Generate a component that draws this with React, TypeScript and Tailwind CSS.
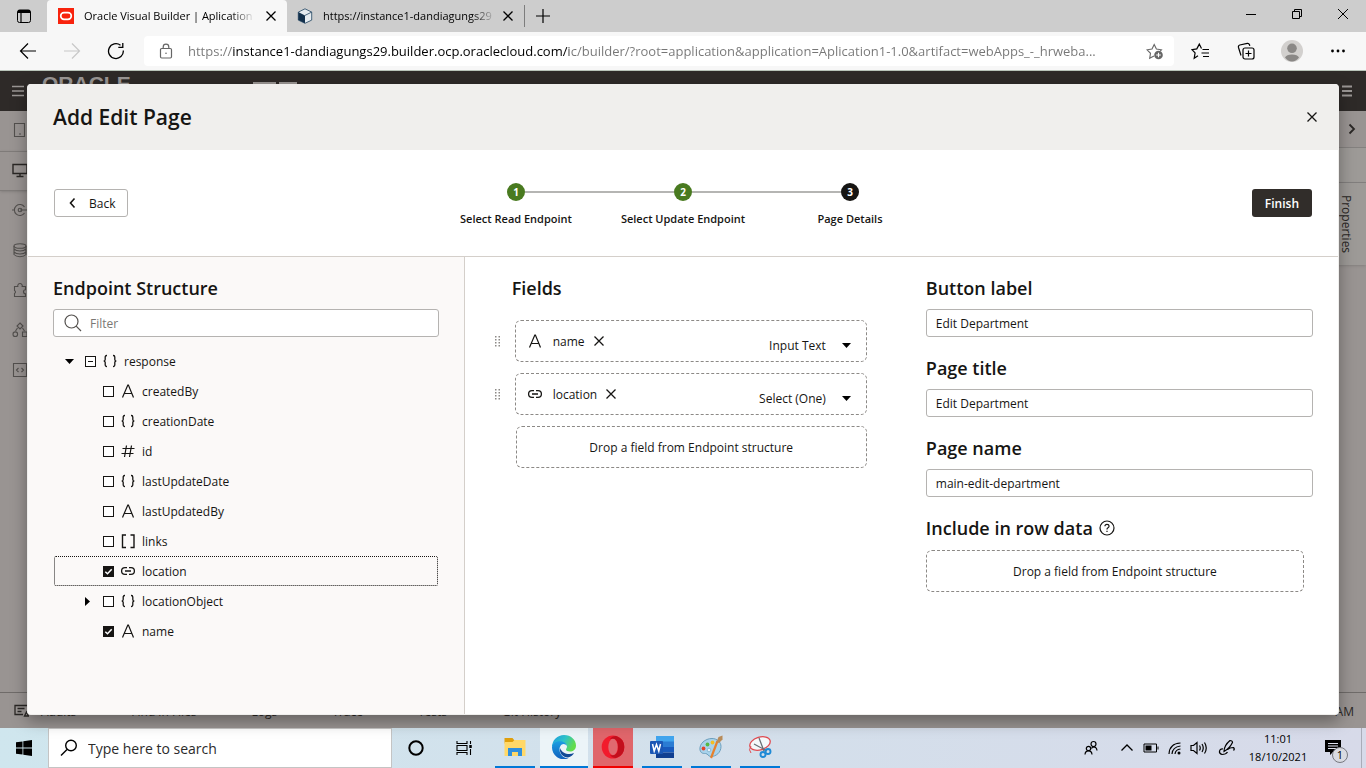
import React, { useState } from "react";

type IconProps = { className?: string };

const Stroke = ({
  size = 16,
  width = 1,
  className = "",
  children,
}: {
  size?: number;
  width?: number;
  className?: string;
  children: React.ReactNode;
}) => (
  <svg
    width={size}
    height={size}
    viewBox={`0 0 ${size} ${size}`}
    fill="none"
    stroke="currentColor"
    strokeWidth={width}
    className={`shrink-0 ${className}`}
    aria-hidden="true"
  >
    {children}
  </svg>
);

/* ---------- shared icons ---------- */

const Cross = ({ className }: IconProps) => (
  <Stroke size={16} width={1.3} className={className}>
    <path d="M3.5 3.5l9 9M12.5 3.5l-9 9" />
  </Stroke>
);

const TextType = () => (
  <Stroke size={16} width={1.2}>
    <path d="M2.5 14.5L7.8 2h.6l5.1 12.5M4.3 10.5h7.4" />
  </Stroke>
);
const ObjectType = () => (
  <Stroke size={16} width={1.3}>
    <path d="M5 2.500h-.3q-1.500 0-1.500 1.500v2.500q0 1.500-1.500 1.500 1.500 0 1.500 1.500v2.500q0 1.500 1.500 1.500H5M11 2.500h.3q1.500 0 1.500 1.500v2.500q0 1.500 1.500 1.500-1.500 0-1.500 1.500v2.500q0 1.500-1.500 1.500H11" />
  </Stroke>
);
const NumberType = () => (
  <Stroke size={16} width={1.2}>
    <path d="M6.500 2.500L4.500 14M11.500 2.500l-2 11.500M2.500 5.500h12M1.500 10.500h12" />
  </Stroke>
);
const ArrayType = () => (
  <Stroke size={16} width={1.4}>
    <path d="M6 2H2.500v12.500H6M10.500 2H14v12.500h-3.500" />
  </Stroke>
);
const LinkType = () => (
  <Stroke size={16} width={1.3}>
    <path d="M7 4.600H5a3.400 3.400 0 0 0 0 6.800h2M9 4.600h2a3.400 3.400 0 0 1 0 6.800H9M5 8h6" />
  </Stroke>
);

const typeIcons = {
  text: TextType,
  object: ObjectType,
  number: NumberType,
  array: ArrayType,
  link: LinkType,
};
type FieldType = keyof typeof typeIcons;

/* ---------- browser chrome ---------- */

function TabTitle({ children }: { children: string }) {
  return (
    <span className="min-w-0 flex-1 whitespace-nowrap text-left text-[11px] leading-4 text-black [mask-image:linear-gradient(to_right,black_86%,transparent)]">
      {children}
    </span>
  );
}

function TabStrip() {
  return (
    <div className="flex h-8 shrink-0 items-stretch bg-[#cdcdcd] text-black">
      <button aria-label="Tab actions" className="flex w-[47px] items-center justify-center">
        <Stroke size={16}>
          <rect x="1.500" y="2" width="13" height="12.500" rx="2" />
          <path d="M2 3.500h12" strokeWidth="3" />
          <path d="M5 4v10" strokeWidth="1.200" />
        </Stroke>
      </button>
      <div className="flex w-60 items-center rounded-t bg-[#f7f7f7] pl-[11px] pr-2">
        <svg width="16" height="16" viewBox="0 0 16 16" className="mr-[10px] shrink-0" aria-hidden="true">
          <rect width="16" height="16" fill="#f8230d" />
          <rect x="2.700" y="4.700" width="10.600" height="6.600" rx="3.300" fill="none" stroke="#fff" strokeWidth="1.700" />
        </svg>
        <TabTitle>Oracle Visual Builder | Aplication</TabTitle>
        <button aria-label="Close tab" className="ml-2 shrink-0">
          <Cross />
        </button>
      </div>
      <div className="flex w-[238px] items-center border-r border-[#7d7d7d] pl-[10px] pr-2 [border-image:linear-gradient(transparent_18%,#7d7d7d_18%_82%,transparent_82%)_1]">
        <svg width="16" height="16" viewBox="0 0 16 16" className="mr-[10px] shrink-0" aria-hidden="true">
          <path d="M8 .8l6.700 3.300v8L8 15.300l-6.700-3.200v-8z" fill="#e5ebf0" stroke="#1f4260" strokeWidth=".8" />
          <path d="M1.300 4.100L8 7.400v7.900l-6.700-3.200z" fill="#12304c" />
          <path d="M8 7.400l6.700-3.300" stroke="#1f4260" strokeWidth=".8" />
        </svg>
        <TabTitle>https://instance1-dandiagungs29</TabTitle>
        <button aria-label="Close tab" className="ml-1 shrink-0">
          <Cross />
        </button>
      </div>
      <button aria-label="New tab" className="flex w-9 items-center justify-center">
        <Stroke size={16} width={1.200}>
          <path d="M8 1v14M1 8h14" />
        </Stroke>
      </button>
      <div className="ml-auto flex pb-1">
        <button aria-label="Minimize" className="flex w-[46px] items-center justify-center">
          <Stroke size={10}>
            <path d="M0 5.500h10" />
          </Stroke>
        </button>
        <button aria-label="Restore" className="flex w-[46px] items-center justify-center">
          <Stroke size={10}>
            <path d="M.5 2.500h7v7h-7zM2.500 2.500v-2h7v7h-2" />
          </Stroke>
        </button>
        <button aria-label="Close" className="flex w-[46px] items-center justify-center">
          <Stroke size={10}>
            <path d="M0 0l10 10M10 0L0 10" />
          </Stroke>
        </button>
      </div>
    </div>
  );
}

const url =
  "https://instance1-dandiagungs29.builder.ocp.oraclecloud.com/ic/builder/?root=application&application=Aplication1-1.0&artifact=webApps_-_hrweba...";

function AddressRow() {
  return (
    <div className="flex h-[39px] shrink-0 items-center border-b border-[#b9c4b9] bg-[#f7f7f7] pl-[6px] pr-[5px] text-black">
      <button aria-label="Back" className="flex w-11 justify-center">
        <Stroke size={18} width={1.200}>
          <path d="M17 9H1.500M9 1.500L1.500 9 9 16.500" />
        </Stroke>
      </button>
      <button aria-label="Forward" className="flex w-11 justify-center text-[#c8c8c8]">
        <Stroke size={18} width={1.200}>
          <path d="M1 9h15.500M9 1.500L16.500 9 9 16.500" />
        </Stroke>
      </button>
      <button aria-label="Refresh" className="flex w-11 justify-center">
        <Stroke size={18} width={1.300}>
          <path d="M16.300 8.500A7.400 7.400 0 1 1 13.500 3.300M15.800 1v4.300h-4.500" />
        </Stroke>
      </button>
      <div className="ml-[6px] mr-[3px] flex h-[30px] min-w-0 flex-1 items-center rounded bg-white px-[14px] text-[#666]">
        <Stroke size={16} width={1.200}>
          <rect x="2.500" y="5.500" width="11" height="9.500" rx="1.200" />
          <path d="M5.200 5.500V4a2.800 2.800 0 0 1 5.600 0v1.500" />
          <circle cx="8" cy="10.300" r=".8" fill="currentColor" stroke="none" />
        </Stroke>
        <input
          aria-label="Address"
          defaultValue={url}
          className="mx-[14px] min-w-0 flex-1 bg-[linear-gradient(to_right,#767676_45px,#000_45px_381px,#767676_381px)] bg-clip-text text-[13px] leading-5 text-transparent outline-none"
        />
        <Stroke size={18} width={1.100} className="-mr-1">
          <path d="M8 14l-4.300 2.300.8-5L1 7.800l5-.7L8.200 2.500l2.200 4.600 5 .7-1.200 1.200" />
          <circle cx="12.500" cy="13" r="4.300" fill="currentColor" stroke="none" />
          <path d="M12.500 10.700v4.600M10.200 13h4.600" stroke="#fff" />
        </Stroke>
      </div>
      <button aria-label="Favorites" className="flex w-[46px] justify-center">
        <Stroke size={18} width={1.200}>
          <path d="M7 13.700l-3.800 2.500.9-5.300L1 7.600l4.800-.7 2.500-4.800 2.200 4.400M11.500 7.500H18M10.500 11H18M12 14.500h6" />
        </Stroke>
      </button>
      <button aria-label="Collections" className="flex w-[46px] justify-center">
        <Stroke size={18} width={1.200}>
          <rect x="6" y="6" width="11" height="11" rx="2" />
          <path d="M11.500 8.500v6M8.500 11.500h6M4 13.500L1.500 5.500q-.5-2 1.300-2.500l7.500-1.700q1.600-.2 2.200 1.500l.3 1" />
        </Stroke>
      </button>
      <button aria-label="Profile" className="flex w-[46px] justify-center">
        <svg width="22" height="22" viewBox="0 0 22 22" aria-hidden="true">
          <circle cx="11" cy="11" r="11" fill="#d2d0ce" />
          <circle cx="11" cy="8.300" r="4.800" fill="#8a8886" />
          <path d="M4 17.500q1.500-3 7-3t7 3q-3 4-7 4t-7-4z" fill="#8a8886" />
        </svg>
      </button>
      <button aria-label="Settings and more" className="flex w-[46px] justify-center">
        <svg width="16" height="16" viewBox="0 0 16 16" aria-hidden="true">
          <circle cx="2.500" cy="8" r="1.400" />
          <circle cx="8" cy="8" r="1.400" />
          <circle cx="13.500" cy="8" r="1.400" />
        </svg>
      </button>
    </div>
  );
}

/* ---------- dimmed application behind the dialog ---------- */

const railIcons: { label: string; active?: boolean; drawing: React.ReactNode }[] = [
  { label: "Mobile", drawing: <path d="M2.500 1.500h10v13h-10zM7 12h2" /> },
  { label: "Web", active: true, drawing: <path d="M1 2.500h14v9H1zM8 11.500v3M4.500 14.500h7" strokeWidth="1.400" /> },
  {
    label: "Services",
    drawing: (
      <>
        <path d="M12.500 5a5.500 5.500 0 1 0 0 6M0 8h2.500M8 8h8" />
        <circle cx="8" cy="8" r="1.800" />
      </>
    ),
  },
  {
    label: "Business objects",
    drawing: (
      <>
        <ellipse cx="8" cy="4" rx="6" ry="2.300" />
        <path d="M2 4v8.500q2 2.300 6 2.300t6-2.300V4M2 7q2 2 6 2t6-2M2 10q2 2 6 2t6-2" />
      </>
    ),
  },
  { label: "Components", drawing: <path d="M2.500 4.500h3.300a2.300 2.300 0 1 1 4.400 0h3.300v3.300a2 2 0 1 0 0 4v2.700h-11v-3q2-1.500 0-3z" /> },
  {
    label: "Processes",
    drawing: (
      <>
        <path d="M8 1l3 3-3 3-3-3zM10.500 10h4.500v4.500h-4.500zM3.500 9l2-3M12.500 9l-2-3" />
        <circle cx="3.300" cy="12.200" r="2.300" />
      </>
    ),
  },
  { label: "Source", drawing: <path d="M1.500 1.500h13v13h-13zM6.500 6l-2 2 2 2M9.500 6l2 2-2 2" /> },
];

const footerTabs = ["Audits", "Find in Files", "Logs", "Trace", "Tests", "Git History"];

function AppBackdrop() {
  return (
    <div className="flex h-full flex-col bg-[#999492] text-[#2a2725]">
      <header className="flex h-10 shrink-0 items-start overflow-hidden bg-[#2e2a28] px-3 text-[#9a9694]">
        <Stroke size={12} width={1.500} className="mt-[14px]">
          <path d="M0 1.500h12M0 6h12M0 10.500h12" />
        </Stroke>
        <span className="ml-[18px] font-['Liberation_Sans',sans-serif] text-[21px] font-bold leading-[26px]">ORACLE</span>
        <svg width="44" height="24" viewBox="0 0 44 24" fill="currentColor" className="ml-[122px] mt-[11px]" aria-hidden="true">
          <path d="M0 0h23v2H0zM26 0h18v2H26z" />
        </svg>
        <Stroke size={12} width={2} className="ml-auto mt-[14px]">
          <path d="M0 1.500h10M0 6h10M0 10.500h10" />
        </Stroke>
      </header>
      <div className="flex min-h-0 flex-1">
        <nav className="flex w-10 flex-col">
          {railIcons.map((item) => (
            <a
              key={item.label}
              href="#"
              aria-label={item.label}
              className={
                item.active
                  ? "flex h-10 items-center border-y border-[#7f7b79] pb-0.5 pl-3 shadow"
                  : "flex h-10 items-center pb-0.5 pl-3 text-[#53504e]"
              }
            >
              <Stroke size={16} width={1.100}>
                {item.drawing}
              </Stroke>
            </a>
          ))}
        </nav>
        <div className="ml-auto flex w-9 flex-col">
          <button aria-label="Expand" className="flex h-9 items-center justify-end pr-[6px]">
            <Stroke size={16} width={1.800}>
              <path d="M5.500 3.500L10 8l-4.500 4.500" />
            </Stroke>
          </button>
          <div className="h-9 border-y border-[#84817f] bg-[#9d9a97]" />
          <div className="flex h-[82px] items-center justify-end bg-[#9d9a97] pr-3 text-[12px] leading-4 shadow">
            <span className="[writing-mode:vertical-rl]">Properties</span>
          </div>
        </div>
      </div>
      <footer className="flex h-9 shrink-0 items-start border-t border-[#6f6b69] pl-[14px] pr-3 pt-[11px] text-[12px] leading-4">
        <Stroke size={15} width={1.300} className="mr-3">
          <path d="M14 7V1.500H1v9h8M3.500 4.500h7M3.500 7.500h4M12.500 8l2 4h-4z" />
        </Stroke>
        {footerTabs.map((tab) => (
          <span key={tab} className="mr-[55px] whitespace-nowrap">
            {tab}
          </span>
        ))}
        <span className="ml-auto">AM</span>
      </footer>
    </div>
  );
}

/* ---------- dialog ---------- */

const steps = ["Select Read Endpoint", "Select Update Endpoint", "Page Details"];

function Stepper() {
  return (
    <ol className="grid grid-cols-3 pt-[3px]">
      {steps.map((label, i) => (
        <li key={label} className="flex w-[167px] flex-col items-center gap-[10px]">
          <div className="flex w-full items-center">
            <span className={i === 0 ? "h-[2px] flex-1" : "h-[2px] flex-1 bg-[#b5b5b3]"} />
            <span
              className={
                i === 2
                  ? "flex size-[18px] items-center justify-center rounded-full bg-[#161513] text-[10px] font-bold leading-3 text-white"
                  : "flex size-[18px] items-center justify-center rounded-full bg-[#497a20] text-[10px] font-bold leading-3 text-white"
              }
            >
              {i + 1}
            </span>
            <span className={i === 2 ? "h-[2px] flex-1" : "h-[2px] flex-1 bg-[#b5b5b3]"} />
          </div>
          <span className="whitespace-nowrap text-[11px] font-semibold leading-4">{label}</span>
        </li>
      ))}
    </ol>
  );
}

type Row = { name: string; type: FieldType; expandable?: boolean };

const rows: Row[] = [
  { name: "createdBy", type: "text" },
  { name: "creationDate", type: "object" },
  { name: "id", type: "number" },
  { name: "lastUpdateDate", type: "object" },
  { name: "lastUpdatedBy", type: "text" },
  { name: "links", type: "array" },
  { name: "location", type: "link" },
  { name: "locationObject", type: "object", expandable: true },
  { name: "name", type: "text" },
];

function Tick({ checked, mixed, onChange }: { checked: boolean; mixed?: boolean; onChange: () => void }) {
  return (
    <span className="relative flex size-[11px] shrink-0">
      <input
        type="checkbox"
        checked={checked}
        onChange={onChange}
        className="size-[11px] appearance-none border border-[#161513] bg-white checked:bg-[#161513]"
      />
      <svg viewBox="0 0 11 11" fill="none" className="pointer-events-none absolute inset-0" aria-hidden="true">
        {checked && <path d="M2.300 5.700l2.200 2.100 4.200-4.600" stroke="#fff" strokeWidth="1.500" />}
        {mixed && <path d="M3 5.500h5" stroke="#161513" />}
      </svg>
    </span>
  );
}

function EndpointTree() {
  const [selected, setSelected] = useState<string[]>(["location", "name"]);
  const toggle = (name: string) =>
    setSelected((cur) => (cur.includes(name) ? cur.filter((n) => n !== name) : [...cur, name]));
  return (
    <section className="w-1/3 shrink-0 border-r border-[#d4cfca] bg-[#fbf9f8] px-[25px] pt-[19px]">
      <h2 className="text-[18px] font-semibold leading-6">Endpoint Structure</h2>
      <div className="mt-[9px] flex h-7 items-center rounded-[3px] border border-[#b5b3b1] bg-white pl-[10px]">
        <Stroke size={18} width={1.200} className="text-[#55524f]">
          <circle cx="7.500" cy="7.500" r="6.500" />
          <path d="M12.200 12.200L17 17" />
        </Stroke>
        <input
          aria-label="Filter"
          placeholder="Filter"
          className="ml-2 w-full min-w-0 bg-transparent pt-0.5 text-[12px] leading-4 outline-none placeholder:text-[#7a7773]"
        />
      </div>
      <ul className="mt-[9px] px-px text-[12px]">
        <li className="flex h-[30px] items-center pl-[11px]">
          <svg width="9" height="5" viewBox="0 0 9 5" aria-hidden="true">
            <path d="M0 0h9L4.500 5z" />
          </svg>
          <label className="ml-[11px] flex items-center gap-[6px]">
            <Tick checked={false} mixed onChange={() => setSelected([])} />
            <ObjectType />
            <span className="pt-0.5 leading-4">response</span>
          </label>
        </li>
        {rows.map((row) => {
          const Icon = typeIcons[row.type];
          return (
            <li
              key={row.name}
              className={
                row.name === "location"
                  ? "flex h-[30px] items-center rounded-[2px] border border-dotted border-[#161513] pl-[30px]"
                  : "flex h-[30px] items-center border border-transparent pl-[30px]"
              }
            >
              <span className="flex w-[18px]">
                {row.expandable && (
                  <svg width="5" height="9" viewBox="0 0 5 9" aria-hidden="true">
                    <path d="M0 0v9l5-4.500z" />
                  </svg>
                )}
              </span>
              <label className="flex items-center gap-[6px]">
                <Tick checked={selected.includes(row.name)} onChange={() => toggle(row.name)} />
                <Icon />
                <span className="pt-0.5 leading-4">{row.name}</span>
              </label>
            </li>
          );
        })}
      </ul>
    </section>
  );
}

const fields: { name: string; type: FieldType; control: string }[] = [
  { name: "name", type: "text", control: "Input Text" },
  { name: "location", type: "link", control: "Select (One)" },
];

function Fields() {
  return (
    <section>
      <h2 className="pl-[17px] text-[18px] font-semibold leading-6">Fields</h2>
      <div className="mt-5 flex flex-col gap-[11px] text-[12px] leading-4">
        {fields.map((field) => {
          const Icon = typeIcons[field.type];
          return (
            <div key={field.name} className="flex items-center">
              <svg width="5" height="11" viewBox="0 0 5 11" fill="#8c8986" className="mr-[15px] shrink-0" aria-hidden="true">
                <path d="M0 0h1.500v1.500H0zM3.500 0H5v1.500H3.500zM0 3h1.500v1.500H0zM3.500 3H5v1.500H3.500zM0 6h1.500v1.500H0zM3.500 6H5v1.500H3.500zM0 9h1.500v1.500H0zM3.500 9H5v1.500H3.500z" />
              </svg>
              <div className="flex h-[42px] flex-1 items-center rounded-md border border-dashed border-[#8c8986] pl-[11px] pr-[15px]">
                <Icon />
                <span className="ml-[10px] pt-0.5">{field.name}</span>
                <button aria-label={`Remove ${field.name}`} className="ml-[6px]">
                  <Cross />
                </button>
                <span className="ml-auto flex items-center pt-2">
                  <select
                    aria-label={`Control for ${field.name}`}
                    defaultValue={field.control}
                    className="field-sizing-content appearance-none bg-transparent pr-4 pt-0.5 outline-none"
                  >
                    <option>{field.control}</option>
                  </select>
                  <svg width="9" height="5" viewBox="0 0 9 5" className="pointer-events-none" aria-hidden="true">
                    <path d="M0 0h9L4.500 5z" />
                  </svg>
                </span>
              </div>
            </div>
          );
        })}
        <div className="ml-[21px] flex h-[42px] items-center justify-center rounded-md border border-dashed border-[#8c8986] pt-0.5">
          Drop a field from Endpoint structure
        </div>
      </div>
    </section>
  );
}

const settings = [
  { id: "button-label", label: "Button label", value: "Edit Department" },
  { id: "page-title", label: "Page title", value: "Edit Department" },
  { id: "page-name", label: "Page name", value: "main-edit-department" },
];

function PageSettings() {
  return (
    <section className="text-[12px] leading-4">
      {settings.map((s) => (
        <div key={s.id} className="mb-[19px]">
          <label htmlFor={s.id} className="block text-[18px] font-semibold leading-6">
            {s.label}
          </label>
          <input
            id={s.id}
            defaultValue={s.value}
            className="mt-[9px] h-7 w-full rounded-[3px] border border-[#b5b3b1] px-[9px] outline-none"
          />
        </div>
      ))}
      <h2 className="flex items-center gap-[6px] text-[18px] font-semibold leading-6">
        Include in row data
        <button aria-label="Help" className="font-normal">
          <Stroke size={16} width={1.200}>
            <circle cx="8" cy="8" r="7" />
            <path d="M5.900 6.300q.1-2 2.100-2t2.100 1.800q0 1.100-1.100 1.700T8 9.500M8 10.700v1.300" />
          </Stroke>
        </button>
      </h2>
      <div className="mr-[9px] mt-[10px] flex h-[42px] items-center justify-center rounded-md border border-dashed border-[#8c8986] pt-0.5">
        Drop a field from Endpoint structure
      </div>
    </section>
  );
}

function AddEditDialog() {
  return (
    <div
      role="dialog"
      aria-labelledby="dialog-title"
      className="absolute inset-x-[27px] bottom-[13px] top-[13px] flex flex-col overflow-hidden rounded border-x border-b border-[#efeeec] bg-white text-[#161513] shadow-[0_6px_16px_rgba(0,0,0,0.35)]"
    >
      <header className="flex h-[66px] shrink-0 items-center justify-between bg-[#f0efed] pl-[25px] pr-[18px]">
        <h1 id="dialog-title" className="text-[21px] font-semibold leading-7">
          Add Edit Page
        </h1>
        <button aria-label="Close">
          <Cross />
        </button>
      </header>
      <div className="grid h-[107px] shrink-0 grid-cols-[1fr_auto_1fr] items-center border-b border-[#d4cfca] px-[26px]">
        <button className="flex h-7 items-center gap-3 justify-self-start rounded-[3px] border border-[#b5b3b1] pl-[10px] pr-3 text-[12px] leading-4">
          <Stroke size={16} width={1.600} className="-mr-1">
            <path d="M9.500 3.500L5.500 8l4 4.500" />
          </Stroke>
          <span className="pt-0.5">Back</span>
        </button>
        <Stepper />
        <button className="h-7 justify-self-end rounded-[3px] bg-[#312d2a] px-[13px] pt-0.5 text-[12px] font-semibold leading-4 text-white">
          Finish
        </button>
      </div>
      <div className="flex min-h-0 flex-1">
        <EndpointTree />
        <div className="grid min-w-0 flex-1 grid-cols-[372fr_387fr] items-start gap-[59px] pl-[30px] pr-[25px] pt-[19px]">
          <Fields />
          <PageSettings />
        </div>
      </div>
    </div>
  );
}

/* ---------- taskbar ---------- */

const FolderIcon = () => (
  <svg width="24" height="24" viewBox="0 0 24 24" aria-hidden="true">
    <path d="M1.500 3h8l2 2.500H22v3H1.500z" fill="#e09f0c" />
    <path d="M1.500 7h8l2-2H22.500v16h-21z" fill="#ffd868" />
    <path d="M5 13h14v8h-4v-4H9v4H5z" fill="#2f8fdd" />
  </svg>
);
const EdgeIcon = () => (
  <svg width="24" height="24" viewBox="0 0 24 24" aria-hidden="true">
    <defs>
      <linearGradient id="edgeTop" x1="0" y1="0" x2="1" y2=".4">
        <stop offset="0" stopColor="#1d9be0" />
        <stop offset=".55" stopColor="#2fc3c9" />
        <stop offset="1" stopColor="#63dc4b" />
      </linearGradient>
      <linearGradient id="edgeBody" x1="0" y1="0" x2="0" y2="1">
        <stop offset="0" stopColor="#1b9de2" />
        <stop offset="1" stopColor="#1160bd" />
      </linearGradient>
    </defs>
    <path d="M0 12A12 12 0 0 1 12 0c7 0 12 5 12 10.500 0 4-3 6-6 6-2.500 0-4-1-4-2 0-.8 1-1.200 1-3 0-2-2-4-5-4-5 0-9 3-10 4.500z" fill="url(#edgeTop)" />
    <path d="M0 12c1-4 4.500-5.700 8-5.700 4 0 7 2.400 7 5.200 0-1.500-2-2.500-3.500-2.500-2.500 0-4 3-4 5.500 0 5 4.500 9 9 9A12 12 0 0 1 0 12z" fill="url(#edgeBody)" />
    <path d="M8 13c-1 5 3 9.500 8 9.500 3-.5 5-2.500 6-4.500-5 2.500-12 .5-14-5z" fill="#124a96" />
  </svg>
);
const OperaIcon = () => (
  <svg width="24" height="24" viewBox="0 0 24 24" aria-hidden="true">
    <ellipse cx="12" cy="12" rx="11.300" ry="11.500" fill="#f21b2c" />
    <path d="M15 1q8.300 2.500 8.300 11T15 23q-4 0-6-3 8 2 8-8T9 4q2-3 6-3z" fill="#c30f1d" />
    <ellipse cx="12" cy="12" rx="4.700" ry="8.300" fill="#e06a70" />
  </svg>
);
const WordIcon = () => (
  <svg width="26" height="24" viewBox="0 0 26 24" aria-hidden="true">
    <path d="M7 1h18v6H7z" fill="#41a5ee" />
    <path d="M7 6.500h18V12H7z" fill="#2b7cd3" />
    <path d="M7 12h18v5.500H7z" fill="#185abd" />
    <path d="M7 17.500h18V23H7z" fill="#103f91" />
    <rect x="1" y="6" width="13" height="13" rx="1" fill="#1b57b5" />
    <path d="M3.500 9l1.700 7 2.300-6.500L9.800 16l1.700-7" fill="none" stroke="#fff" strokeWidth="1.500" />
  </svg>
);
const PaintIcon = () => (
  <svg width="26" height="24" viewBox="0 0 26 24" aria-hidden="true">
    <path d="M2 15C1 9 7 3.500 14 3.500c5 0 9 3.500 9 8 0 6-5 10-10 10-3 0-3-3-5.500-3S3 18.500 2 15z" fill="#a9d3ec" stroke="#6c9fbd" />
    <circle cx="5.500" cy="13.500" r="1.900" fill="#e4432c" />
    <circle cx="9.500" cy="9.500" r="1.900" fill="#57b947" />
    <circle cx="14.500" cy="7.500" r="1.900" fill="#f3bf24" />
    <circle cx="11" cy="15" r="1.800" fill="#e6f3fa" stroke="#6c9fbd" strokeWidth=".6" />
    <path d="M13 23l6.500-17" stroke="#e7812d" strokeWidth="2.200" />
    <path d="M18.500 7l2-5 4-1.500v4l-3.500 3.500z" fill="#b98c59" />
  </svg>
);
const SnipIcon = () => (
  <svg width="26" height="24" viewBox="0 0 26 24" fill="none" aria-hidden="true">
    <ellipse cx="13" cy="8.500" rx="10.500" ry="6.300" transform="rotate(-17 13 8.500)" fill="#f5f8fa" stroke="#e04a50" strokeWidth="1.300" />
    <path d="M4 11q-3 4 0 7" stroke="#e04a50" />
    <path d="M12 3l5 13M7 9l13 7" stroke="#6a7077" strokeWidth="1.300" />
    <circle cx="16" cy="19.500" r="2.500" stroke="#1f8ad6" strokeWidth="1.900" />
    <circle cx="21" cy="16.500" r="2.500" stroke="#1f8ad6" strokeWidth="1.900" />
  </svg>
);

function Taskbar() {
  return (
    <footer className="flex h-10 shrink-0 items-stretch bg-linear-to-r from-[#cfe6ee] to-[#d7dae9] text-black">
      <button aria-label="Start" className="flex w-12 items-center justify-center">
        <svg width="16" height="16" viewBox="0 0 16 16" aria-hidden="true">
          <path d="M0 2.300l6.500-.9v6.200H0zM7.300 1.300L16 0v7.600H7.300zM0 8.400h6.500v6.200L0 13.700zM7.300 8.400H16V16l-8.700-1.300z" />
        </svg>
      </button>
      <div className="flex w-[344px] items-center border border-[#c4c4c4] bg-white pl-[11px]">
        <Stroke size={18} width={1.400}>
          <circle cx="11" cy="6.500" r="5.300" />
          <path d="M7 10.500L1 16.500" />
        </Stroke>
        <input
          aria-label="Search"
          placeholder="Type here to search"
          className="ml-[10px] w-full min-w-0 pt-0.5 text-[14px] leading-5 outline-none placeholder:text-[#2b2b2b]"
        />
      </div>
      <button aria-label="Cortana" className="flex w-12 items-center justify-center">
        <Stroke size={16} width={2}>
          <circle cx="8" cy="8" r="6.700" />
        </Stroke>
      </button>
      <button aria-label="Task View" className="mr-[7px] flex w-12 items-center justify-center">
        <Stroke size={16} width={1.100}>
          <path d="M1 1v2.500h10V1M1 15v-2.500h10V15M1 5.500h10v5H1zM14.500 1v3M14.500 9v6" />
          <path d="M14.500 5v3" strokeWidth="2.500" />
        </Stroke>
      </button>
      <button aria-label="File Explorer" className="flex w-10 items-center justify-center border-b-2 border-[#0078d7]">
        <FolderIcon />
      </button>
      <button aria-label="Microsoft Edge" className="mx-[5px] flex w-12 items-center justify-center border-b-2 border-[#0078d7] bg-[#ecf4f8]">
        <EdgeIcon />
      </button>
      <button aria-label="Opera" className="flex w-10 items-center justify-center border-b-2 border-[#f00000] bg-[#e0666b]">
        <OperaIcon />
      </button>
      <button aria-label="Word" className="ml-[9px] flex w-10 items-center justify-center border-b-2 border-[#0078d7]">
        <WordIcon />
      </button>
      <button aria-label="Paint" className="ml-[9px] flex w-10 items-center justify-center border-b-2 border-[#0078d7]">
        <PaintIcon />
      </button>
      <button aria-label="Snipping Tool" className="ml-[9px] flex w-10 items-center justify-center border-b-2 border-[#0078d7]">
        <SnipIcon />
      </button>
      <div className="ml-auto flex items-center">
        <button aria-label="People" className="mr-3 flex w-6 justify-center">
          <Stroke size={16} width={1.200}>
            <circle cx="10.500" cy="4" r="2.500" />
            <circle cx="5.500" cy="8.500" r="2.200" />
            <path d="M8.500 8.500q.7-1.700 2.300-1.700 2.800.2 3.200 3.700M2 14.500q.3-3.600 3.500-3.600t3.500 3.600" />
          </Stroke>
        </button>
        <button aria-label="Show hidden icons" className="flex w-6 justify-center">
          <Stroke size={14} width={1.300}>
            <path d="M1.500 9.500L7 4l5.500 5.500" />
          </Stroke>
        </button>
        <span className="flex w-6 justify-center">
          <Stroke size={16}>
            <path d="M1 4h12.500v8H1zM15 6.500v3" />
            <path d="M2.500 5.500h6v5h-6z" fill="currentColor" stroke="none" />
          </Stroke>
        </span>
        <span className="flex w-6 justify-center">
          <Stroke size={16} width={1.200}>
            <path d="M2 14Q2.500 3.500 13.500 3M5 14Q5.500 7 13.500 6M8 14q.5-4.500 5.500-5" />
            <circle cx="12" cy="13" r="1.500" fill="currentColor" stroke="none" />
          </Stroke>
        </span>
        <span className="flex w-6 justify-center">
          <Stroke size={18} width={1.200}>
            <path d="M1 6.500h2.500L7 3.500v11l-3.500-3H1zM9.500 6.500q1.500 2.500 0 5M12 5q2.500 4 0 8M14.500 3.500q3.500 5.500 0 11" />
          </Stroke>
        </span>
        <span className="flex w-8 justify-center">
          <Stroke size={18} width={1.200}>
            <path d="M5 10q-3-.5-3.500 2T4 15.500q4 0 5.500-2.500M6 12.500q0-6 6-11 2.500 0 2.500 2-3 6-8.500 9zM9.500 10.500q2-2 6-2 1.500 1.500 0 3" />
          </Stroke>
        </span>
        <div className="flex w-[70px] flex-col items-center text-[11px] leading-[18px]">
          <span>11:01</span>
          <span>18/10/2021</span>
        </div>
        <button aria-label="Notifications" className="relative flex w-12 items-center pl-3">
          <svg width="16" height="16" viewBox="0 0 16 16" aria-hidden="true">
            <path d="M0 0h16v12H8l-3 3v-3H0z" />
            <path d="M3 3.500h10M3 6h10M3 8.500h10" stroke="#dde0ee" />
          </svg>
          <span className="absolute -bottom-[7px] left-[19px] flex size-4 items-center justify-center rounded-full border border-[#77797f] bg-[#d9dbe2] text-[11px] leading-3">
            1
          </span>
        </button>
        <span className="h-10 w-[5px] border-l border-[#a9acb8]" />
      </div>
    </footer>
  );
}

export default function App() {
  return (
    <div className="flex h-screen flex-col overflow-hidden font-['Open_Sans','Noto_Sans',sans-serif]">
      <TabStrip />
      <AddressRow />
      <main className="relative min-h-0 flex-1">
        <AppBackdrop />
        <AddEditDialog />
      </main>
      <Taskbar />
    </div>
  );
}
